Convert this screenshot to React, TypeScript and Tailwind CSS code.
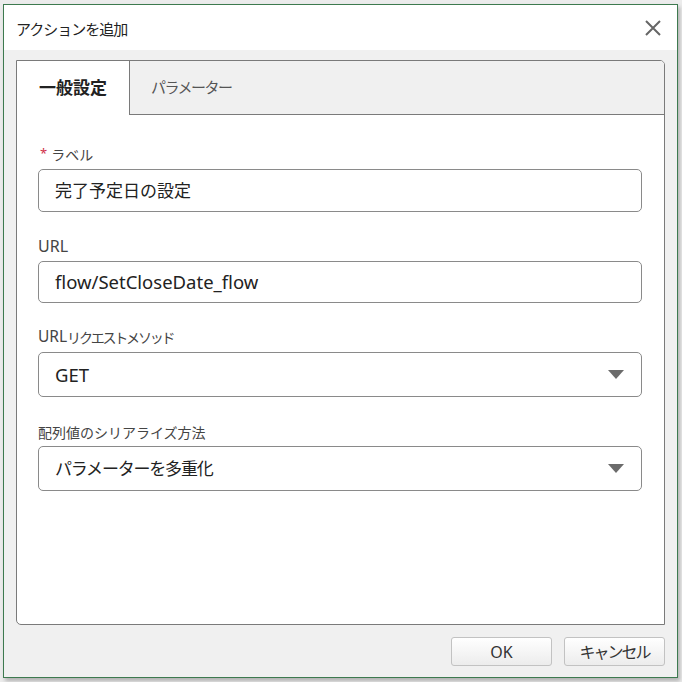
import React from "react";

const font = { fontFamily: '"Noto Sans", "Noto Sans CJK JP", sans-serif' };

function Caret() {
  return (
    <svg width="16" height="10" viewBox="0 0 16 10" className="absolute right-[17px] top-1/2 -translate-y-1/2">
      <path d="M0 0 H16 L8 9 Z" fill="#6b6b6b" />
    </svg>
  );
}

export default function App() {
  return (
    <div className="w-[682px] h-[682px] bg-[#ececec] pt-[4px] pl-[3px]" style={font}>
      <div className="w-[675px] h-[674px] border border-[#3d7a4f] bg-[#f0f0f0] flex flex-col shadow-[2px_3px_4px_rgba(0,0,0,0.25)]">
        <div className="h-[45px] bg-white flex items-center justify-between pl-[12px] pr-[16px] shrink-0">
          <span className="text-[15px] tracking-[-1px] text-[#222] mt-[3px]">アクションを追加</span>
          <svg width="16" height="16" viewBox="0 0 16 16">
            <path d="M1 1 L15 15 M15 1 L1 15" stroke="#666" strokeWidth="2" />
          </svg>
        </div>
        <div className="pl-[12px] pt-[10px]">
          <div className="w-[649px] h-[565px] border border-[#7a7a7a] rounded-tr-[5px] rounded-bl-[5px] bg-white flex flex-col overflow-hidden">
            <div className="h-[54px] flex bg-[#f0f0f0] shrink-0">
              <div className="w-[113px] bg-white border-r border-[#7a7a7a] flex items-center justify-center">
                <span className="text-[17px] font-bold text-[#222]">一般設定</span>
              </div>
              <div className="flex-1 border-b border-[#7a7a7a] flex items-center pl-[21px]">
                <span className="text-[15px] tracking-[-1.5px] text-[#555]">パラメーター</span>
              </div>
            </div>
            <div className="pl-[21px] pt-[29px]">
              <div className="h-[20px] flex items-center text-[14px] text-[#444]">
                <span className="text-[#d0304a] ml-[2px] mr-[4px] text-[13px]">*</span>ラベル
              </div>
              <div className="mt-[5px] w-[604px] h-[43px] border border-[#8a8a8a] rounded-[5px] flex items-center pl-[16px] text-[17px] text-[#222]">
                完了予定日の設定
              </div>
              <div className="mt-[24px] h-[20px] flex items-center text-[16px] text-[#444]">URL</div>
              <div className="mt-[5px] w-[604px] h-[42px] border border-[#8a8a8a] rounded-[5px] flex items-center pl-[16px] text-[18.5px] text-[#222]">
                flow/SetCloseDate_flow
              </div>
              <div className="mt-[24px] h-[20px] flex items-center text-[#444]">
                <span className="text-[15.5px]">URL</span>
                <span className="text-[14px] tracking-[-2.2px]">リクエストメソッド</span>
              </div>
              <div className="relative mt-[5px] w-[604px] h-[45px] border border-[#8a8a8a] rounded-[5px] flex items-center pl-[16px] text-[18.5px] text-[#222]">
                GET
                <Caret />
              </div>
              <div className="mt-[25px] h-[20px] flex items-center text-[14px] text-[#444]">配列値のシリアライズ方法</div>
              <div className="relative mt-[4px] w-[604px] h-[45px] border border-[#8a8a8a] rounded-[5px] flex items-center pl-[16px] text-[17px] tracking-[-1.2px] text-[#222]">
                パラメーターを多重化
                <Caret />
              </div>
            </div>
          </div>
        </div>
        <div className="flex justify-end gap-[12px] pr-[12px] mt-[12px]">
          <button className="w-[101px] h-[29px] border border-[#c2c2c2] rounded-[3px] bg-gradient-to-b from-white to-[#ececec] text-[16px] text-[#333]">
            OK
          </button>
          <button className="w-[101px] h-[29px] border border-[#c2c2c2] rounded-[3px] bg-gradient-to-b from-white to-[#ececec] text-[16px] tracking-[-2px] text-[#333]">
            キャンセル
          </button>
        </div>
      </div>
    </div>
  );
}
